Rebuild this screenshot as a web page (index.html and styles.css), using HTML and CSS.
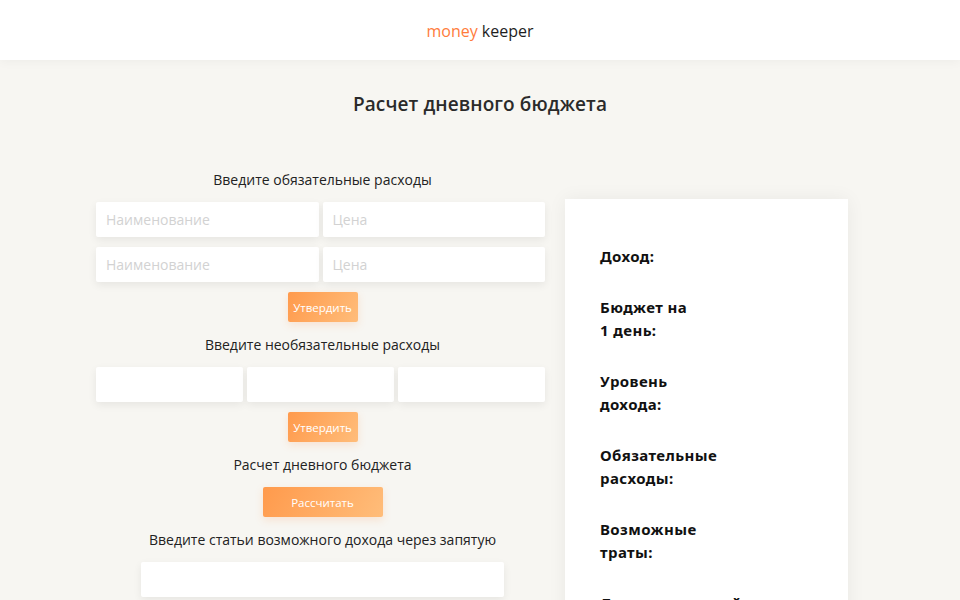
FILE: index.html
```html
<!DOCTYPE html>
<html lang="ru">
<head>
<meta charset="utf-8">
<title>money keeper</title>
<link rel="stylesheet" href="styles.css">
</head>
<body>
<header class="header">
  <div class="logo"><span class="logo-accent">money</span> keeper</div>
</header>
<main class="main">
  <h1 class="title">Расчет дневного бюджета</h1>
  <div class="layout">
    <section class="form">
      <div class="label">Введите обязательные расходы</div>
      <div class="row row-2">
        <input class="field" type="text" placeholder="Наименование">
        <input class="field" type="text" placeholder="Цена">
      </div>
      <div class="row row-2 row-next">
        <input class="field" type="text" placeholder="Наименование">
        <input class="field" type="text" placeholder="Цена">
      </div>
      <button class="btn">Утвердить</button>
      <div class="label label-next">Введите необязательные расходы</div>
      <div class="row row-3">
        <input class="field" type="text">
        <input class="field" type="text">
        <input class="field" type="text">
      </div>
      <button class="btn">Утвердить</button>
      <div class="label label-next">Расчет дневного бюджета</div>
      <button class="btn btn-wide">Рассчитать</button>
      <div class="label label-next">Введите статьи возможного дохода через запятую</div>
      <input class="field field-income" type="text">
    </section>
    <aside class="card">
      <div class="stat">Доход:</div>
      <div class="stat">Бюджет на 1&nbsp;день:</div>
      <div class="stat">Уровень дохода:</div>
      <div class="stat">Обязательные расходы:</div>
      <div class="stat">Возможные траты:</div>
      <div class="stat">Дополнительный доход:</div>
    </aside>
  </div>
</main>
</body>
</html>
```

FILE: styles.css
```css
* { box-sizing: border-box; }
html, body { margin: 0; padding: 0; }
body {
  background: #f7f6f2;
  font-family: "Open Sans", "Noto Sans", sans-serif;
  color: #2b2b2b;
  height: 600px;
  overflow: hidden;
}
.header {
  height: 60px;
  background: #ffffff;
  display: flex;
  align-items: center;
  justify-content: center;
  box-shadow: 0 2px 10px rgba(0,0,0,0.04);
  position: relative;
  z-index: 1;
}
.logo {
  font-size: 16px;
  color: #1e1e1e;
  margin-top: 2px;
}
.logo-accent { color: #ff7c3c; }
.main { padding-top: 30px; }
.title {
  margin: 0;
  text-align: center;
  font-size: 19px;
  font-weight: 600;
  line-height: 28px;
  color: #2a2a2a;
  letter-spacing: 0.1px;
}
.layout {
  display: flex;
  align-items: flex-start;
  gap: 16px;
  padding-left: 96px;
  margin-top: 52px;
}
.form {
  width: 453px;
  display: flex;
  flex-direction: column;
  align-items: center;
}
.label {
  font-size: 14px;
  line-height: 20px;
  font-weight: 500;
  color: #222;
  margin-bottom: 12px;
}
.label-next { margin-top: 13px; }
.row {
  display: grid;
  gap: 4px;
  width: 449px;
  align-self: flex-start;
}
.row-2 { grid-template-columns: 1fr 1fr; }
.row-3 { grid-template-columns: 1fr 1fr 1fr; }
.row-next { margin-top: 10px; }
.field {
  height: 35px;
  border: none;
  border-radius: 2px;
  background: #fff;
  box-shadow: 0 3px 8px rgba(0,0,0,0.07);
  padding: 0 10px;
  font-family: inherit;
  font-size: 14px;
  color: #333;
  outline: none;
  min-width: 0;
}
.field::placeholder { color: #d2d2d2; }
.btn {
  margin-top: 10px;
  width: 70px;
  height: 30px;
  border: none;
  border-radius: 2px;
  background: linear-gradient(120deg, #ff9a4c 0%, #ffbd7a 100%);
  color: #fff;
  font-family: inherit;
  font-size: 11.5px;
  padding: 0;
  box-shadow: 0 3px 8px rgba(255,140,60,0.18);
}
.btn-wide {
  width: 120px;
  margin-top: 0;
}
.field-income {
  width: 363px;
  margin-bottom: 20px;
}
.card {
  width: 283px;
  height: 460px;
  margin-top: 29px;
  background: #fff;
  box-shadow: 0 0 18px rgba(0,0,0,0.06);
  padding: 46px 35px 0;
}
.stat {
  width: 125px;
  font-family: "Noto Sans", sans-serif;
  font-weight: 700;
  font-size: 15px;
  line-height: 23px;
  color: #111;
  letter-spacing: 0.4px;
  margin-bottom: 28px;
}
```
